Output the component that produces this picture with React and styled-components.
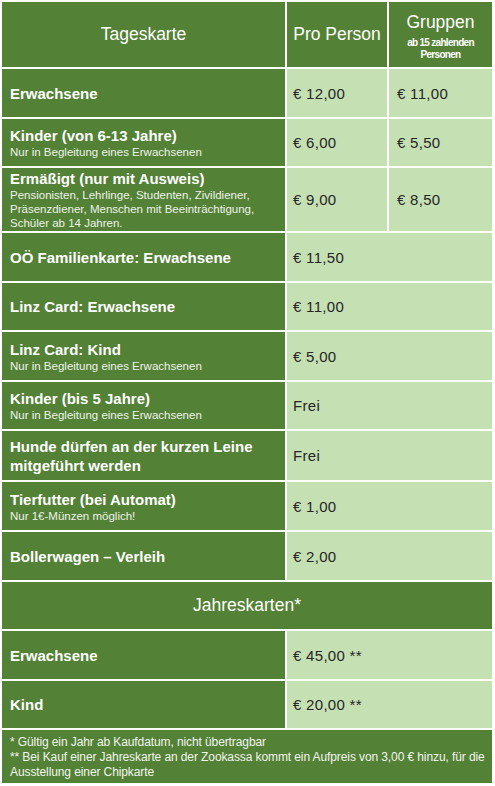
import React from 'react';
import styled, { createGlobalStyle } from 'styled-components';

const DARK = '#538135';
const LIGHT = '#c5e0b3';

const GlobalStyle = createGlobalStyle`
  body {
    margin: 0;
    background: #fff;
    font-family: "Liberation Sans", Arial, sans-serif;
  }
`;

const Table = styled.div`
  display: grid;
  grid-template-columns: 283px 100px 103px;
  gap: 2px;
  padding: 2px;
  width: max-content;
  background: #fff;
`;

const HeadCell = styled.div`
  grid-column: span ${(props) => props.span || 1};
  height: ${(props) => props.h}px;
  background: ${DARK};
  color: #fff;
  display: flex;
  flex-direction: column;
  align-items: center;
  justify-content: center;
  text-align: center;
  font-size: 17.5px;
  box-sizing: border-box;
  padding-top: ${(props) => props.shift || 0}px;
`;

const HeadBig = styled.div`
  line-height: 22px;
  margin-bottom: 4px;
`;

const HeadSmall = styled.div`
  font-size: 10px;
  font-weight: bold;
  letter-spacing: -0.7px;
  line-height: 12px;
`;

const LabelCell = styled.div`
  min-height: ${(props) => props.h}px;
  background: ${DARK};
  color: #fff;
  padding: 0 8px;
  display: flex;
  flex-direction: column;
  justify-content: center;
  box-sizing: border-box;
`;

const Title = styled.div`
  font-size: 15px;
  font-weight: bold;
  line-height: 19px;
`;

const Note = styled.div`
  font-size: 11.5px;
  line-height: 14px;
  color: #eef3ea;
`;

const PriceCell = styled.div`
  grid-column: span ${(props) => props.span || 1};
  background: ${LIGHT};
  color: #262626;
  font-size: 15px;
  letter-spacing: 0.3px;
  padding-left: ${(props) => props.pad}px;
  display: flex;
  align-items: center;
`;

const Footer = styled.div`
  grid-column: span 3;
  background: ${DARK};
  color: #f2f5ef;
  font-size: 12px;
  line-height: 15px;
  letter-spacing: -0.1px;
  white-space: nowrap;
  padding: 5px 8px 3px;
`;

const tageskarten = [
  { label: ['Erwachsene'], person: '€ 12,00', group: '€ 11,00', h: 48 },
  { label: ['Kinder (von 6-13 Jahre)'], note: ['Nur in Begleitung eines Erwachsenen'], person: '€ 6,00', group: '€ 5,50', h: 47 },
  {
    label: ['Ermäßigt (nur mit Ausweis)'],
    note: [
      'Pensionisten, Lehrlinge, Studenten, Zivildiener,',
      'Präsenzdiener, Menschen mit Beeinträchtigung,',
      'Schüler ab 14 Jahren.'
    ],
    person: '€ 9,00',
    group: '€ 8,50',
    h: 63
  },
  { label: ['OÖ Familienkarte: Erwachsene'], person: '€ 11,50', h: 48 },
  { label: ['Linz Card: Erwachsene'], person: '€ 11,00', h: 47 },
  { label: ['Linz Card: Kind'], note: ['Nur in Begleitung eines Erwachsenen'], person: '€ 5,00', h: 48 },
  { label: ['Kinder (bis 5 Jahre)'], note: ['Nur in Begleitung eines Erwachsenen'], person: 'Frei', h: 47 },
  { label: ['Hunde dürfen an der kurzen Leine', 'mitgeführt werden'], person: 'Frei', h: 49 },
  { label: ['Tierfutter (bei Automat)'], note: ['Nur 1€-Münzen möglich!'], person: '€ 1,00', h: 48 },
  { label: ['Bollerwagen – Verleih'], person: '€ 2,00', h: 48 }
];

const jahreskarten = [
  { label: ['Erwachsene'], person: '€ 45,00 **', h: 48 },
  { label: ['Kind'], person: '€ 20,00 **', h: 47 }
];

const renderRow = (row, i) => (
  <React.Fragment key={i}>
    <LabelCell h={row.h}>
      {row.label.map((l, j) => <Title key={j}>{l}</Title>)}
      {row.note && row.note.map((n, j) => <Note key={j}>{n}</Note>)}
    </LabelCell>
    {row.group ? (
      <>
        <PriceCell pad={6}>{row.person}</PriceCell>
        <PriceCell pad={8}>{row.group}</PriceCell>
      </>
    ) : (
      <PriceCell span={2} pad={6}>{row.person}</PriceCell>
    )}
  </React.Fragment>
);

const App = () => (
  <>
    <GlobalStyle />
    <Table>
      <HeadCell h={65}>Tageskarte</HeadCell>
      <HeadCell h={65}>Pro Person</HeadCell>
      <HeadCell h={65} shift={3}>
        <HeadBig>Gruppen</HeadBig>
        <HeadSmall>ab 15 zahlenden</HeadSmall>
        <HeadSmall>Personen</HeadSmall>
      </HeadCell>
      {tageskarten.map(renderRow)}
      <HeadCell span={3} h={47}>Jahreskarten*</HeadCell>
      {jahreskarten.map(renderRow)}
      <Footer>
        * Gültig ein Jahr ab Kaufdatum, nicht übertragbar
        <br />
        ** Bei Kauf einer Jahreskarte an der Zookassa kommt ein Aufpreis von 3,00 € hinzu, für die
        <br />
        Ausstellung einer Chipkarte
      </Footer>
    </Table>
  </>
);

export default App;
